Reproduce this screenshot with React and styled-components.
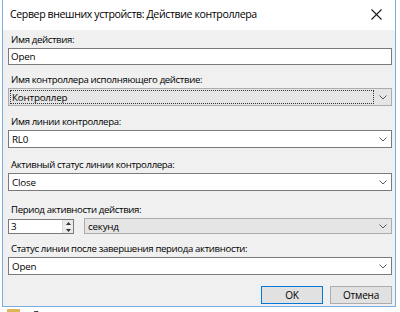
import React from "react";
import styled, { createGlobalStyle } from "styled-components";

const Global = createGlobalStyle`
  html, body { margin: 0; padding: 0; background: #fff; overflow: hidden; }
  * { box-sizing: border-box; }
`;

const FONT = `"Open Sans", "Noto Sans", sans-serif`;

const Screen = styled.div`
  width: 400px;
  height: 312px;
  overflow: hidden;
  background: #fff;
  display: flex;
  flex-direction: column;
  font-family: ${FONT};
  color: #000;
`;

const Dialog = styled.div`
  margin-left: 2px;
  width: 394px;
  height: 307px;
  flex: none;
  border: 1px solid #7aaee0;
  border-top: none;
  display: flex;
  flex-direction: column;
  background: #f0f0f0;
`;

const TitleBar = styled.div`
  height: 30px;
  background: #fff;
  display: flex;
  align-items: center;
  justify-content: space-between;
  padding: 0 6px 2px 7px;
  flex: none;
`;

const Title = styled.div`
  font-size: 10.6px;
  letter-spacing: -0.4px;
`;

const CloseBtn = styled.div`
  width: 26px;
  height: 22px;
  display: flex;
  align-items: center;
  justify-content: center;
`;

const Body = styled.div`
  flex: 1;
  display: flex;
  flex-direction: column;
  padding: 3px 3px 0 5px;
`;

const Group = styled.div`
  display: flex;
  flex-direction: column;
  margin-top: ${(p) => p.$mt || 0}px;
`;

const Label = styled.div`
  height: 14px;
  line-height: 14px;
  font-size: 9.6px;
  padding-left: 3px;
  margin-bottom: 1px;
  white-space: nowrap;
  letter-spacing: -0.35px;
`;

const TextBox = styled.div`
  height: 17px;
  background: #fff;
  border: 1px solid #7a7a7a;
  font-size: 9.8px;
  line-height: 15px;
  padding-left: 2px;
  letter-spacing: -0.2px;
`;

const Combo = styled.div`
  height: ${(p) => p.$h || 18}px;
  flex: ${(p) => (p.$grow ? 1 : "none")};
  background: ${(p) => (p.$gray ? "#e5e5e5" : "#fff")};
  border: 1px solid ${(p) => (p.$gray ? "#acacac" : "#7a7a7a")};
  display: flex;
  align-items: stretch;
`;

const ComboValue = styled.div`
  flex: 1;
  margin: 1px;
  border: 1px dotted ${(p) => (p.$focus ? "#333" : "transparent")};
  font-size: 9.8px;
  letter-spacing: -0.2px;
  display: flex;
  align-items: center;
  padding-left: 1px;
  white-space: nowrap;
`;

const Arrow = styled.div`
  width: 16px;
  display: flex;
  align-items: center;
  justify-content: center;
`;

const Row = styled.div`
  display: flex;
  gap: 10px;
  align-items: flex-start;
`;

const Numeric = styled.div`
  width: 66px;
  height: 15px;
  background: #fff;
  border: 1px solid #7a7a7a;
  display: flex;
  margin-top: 1px;
`;

const NumValue = styled.div`
  flex: 1;
  font-size: 9.8px;
  line-height: 13px;
  padding-left: 2px;
`;

const Spinner = styled.div`
  width: 11px;
  display: flex;
  flex-direction: column;
  border-left: 1px solid #dadada;
`;

const SpinBtn = styled.div`
  flex: 1;
  background: #eaeaea;
  display: flex;
  align-items: center;
  justify-content: center;
  & + & { border-top: 1px solid #fff; }
`;

const Buttons = styled.div`
  display: flex;
  justify-content: flex-end;
  gap: 7px;
  margin-top: 11px;
`;

const Button = styled.div`
  width: 62px;
  height: 18px;
  background: #e1e1e1;
  border: 1px solid ${(p) => (p.$default ? "#0078d7" : "#adadad")};
  font-size: 10px;
  letter-spacing: -0.2px;
  display: flex;
  align-items: center;
  justify-content: center;
`;

const UnderRow = styled.div`
  display: flex;
  align-items: flex-start;
  gap: 12px;
  padding: 2px 0 0 7px;
  font-size: 10px;
  line-height: 12px;
  color: #222;
`;

const Folder = styled.div`
  width: 13px;
  height: 10px;
  background: #dcb556;
  border-radius: 1px;
`;

const Chevron = () => (
  <svg width="8" height="5" viewBox="0 0 8 5">
    <polyline points="0.5,0.5 4,4 7.5,0.5" fill="none" stroke="#5a5a5a" strokeWidth="1" />
  </svg>
);

const CloseIcon = () => (
  <svg width="11" height="11" viewBox="0 0 11 11">
    <path d="M0.5 0.5 L10.5 10.5 M10.5 0.5 L0.5 10.5" stroke="#1a1a1a" strokeWidth="1.1" />
  </svg>
);

const Tri = ({ up }) => (
  <svg width="5" height="3" viewBox="0 0 5 3">
    <polygon points={up ? "0,3 5,3 2.5,0" : "0,0 5,0 2.5,3"} fill="#333" />
  </svg>
);

const ComboField = ({ value, gray, focus, h, grow }) => (
  <Combo $gray={gray} $h={h} $grow={grow}>
    <ComboValue $focus={focus}>{value}</ComboValue>
    <Arrow>
      <Chevron />
    </Arrow>
  </Combo>
);

export default function App() {
  return (
    <Screen>
      <Global />
      <Dialog>
        <TitleBar>
          <Title>Сервер внешних устройств: Действие контроллера</Title>
          <CloseBtn>
            <CloseIcon />
          </CloseBtn>
        </TitleBar>
        <Body>
          <Group>
            <Label>Имя действия:</Label>
            <TextBox>Open</TextBox>
          </Group>
          <Group $mt={8}>
            <Label>Имя контроллера исполняющего действие:</Label>
            <ComboField value="Контроллер" gray focus />
          </Group>
          <Group $mt={9}>
            <Label>Имя линии контроллера:</Label>
            <ComboField value="RL0" />
          </Group>
          <Group $mt={10}>
            <Label>Активный статус линии контроллера:</Label>
            <ComboField value="Close" />
          </Group>
          <Group $mt={12}>
            <Label>Период активности действия:</Label>
            <Row>
              <Numeric>
                <NumValue>3</NumValue>
                <Spinner>
                  <SpinBtn>
                    <Tri up />
                  </SpinBtn>
                  <SpinBtn>
                    <Tri />
                  </SpinBtn>
                </Spinner>
              </Numeric>
              <ComboField value="секунд" gray h={16} grow />
            </Row>
          </Group>
          <Group $mt={8}>
            <Label>Статус линии после завершения периода активности:</Label>
            <ComboField value="Open" />
          </Group>
          <Buttons>
            <Button $default>OK</Button>
            <Button>Отмена</Button>
          </Buttons>
        </Body>
      </Dialog>
      <UnderRow>
        <Folder />
        <span>Линии контроллера</span>
      </UnderRow>
    </Screen>
  );
}
